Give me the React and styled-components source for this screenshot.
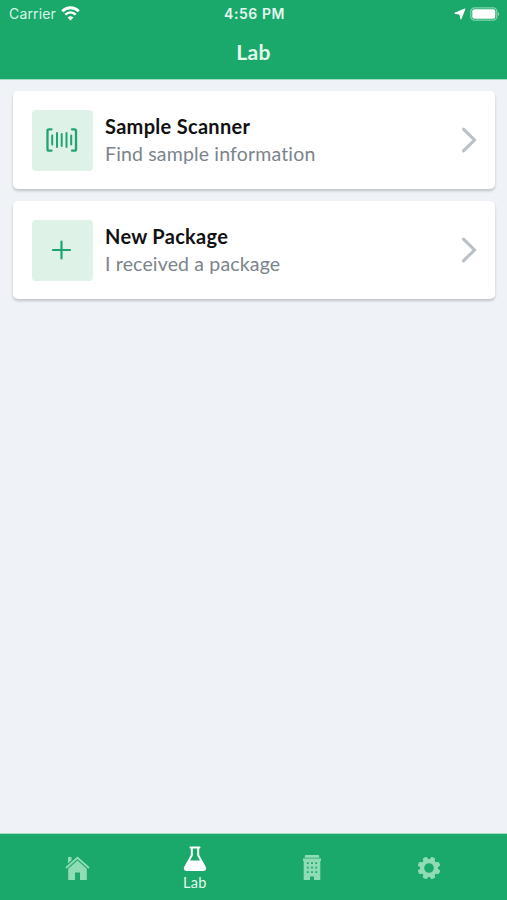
import React from "react"
import styled, { createGlobalStyle } from "styled-components"

const GlobalStyle = createGlobalStyle`
  * {
    box-sizing: border-box;
  }
  body {
    margin: 0;
    background: #eff3f8;
    font-family: Lato, "Noto Sans", sans-serif;
  }
`

const Screen = styled.div`
  display: flex;
  flex-direction: column;
  width: 100%;
  height: 100vh;
  overflow: hidden;
`
const Header = styled.header`
  height: 80px;
  flex: none;
  border-bottom: 1px solid #a5dcc4;
  background: #1aa86b;
  color: #fff;
`
const StatusBar = styled.div`
  display: grid;
  grid-template-columns: 1fr auto 1fr;
  align-items: center;
  height: 27px;
  padding: 0 7px 0 9px;
  font-family: Inter, sans-serif;
  font-size: 14px;
  line-height: 27px;
`
const Carrier = styled.div`
  display: flex;
  align-items: center;
  gap: 5px;
  color: #d9f6e8;
  letter-spacing: 0.15px;
`
const Time = styled.div`
  font-weight: 600;
  color: #e4f9ee;
  letter-spacing: 0.55px;
`
const Indicators = styled.div`
  display: flex;
  align-items: center;
  justify-content: flex-end;
  gap: 4px;
`
const Title = styled.h1`
  margin: 0;
  text-align: center;
  font-size: 21px;
  line-height: 50px;
  font-weight: 700;
  color: #e4f9ee;
  letter-spacing: 0.4px;
`
const List = styled.main`
  display: flex;
  flex: 1;
  flex-direction: column;
  gap: 12px;
  padding: 11px 12px 0 13px;
`
const Card = styled.div`
  display: flex;
  align-items: center;
  height: 98px;
  padding: 0 18px;
  border-radius: 5px;
  background: #fff;
  box-shadow: 0 2px 3px rgba(0, 0, 0, 0.2);
`
const IconBox = styled.div`
  display: flex;
  align-items: center;
  justify-content: center;
  width: 61px;
  height: 61px;
  margin-right: 12.5px;
  margin-left: 0.5px;
  border-radius: 4px;
  background: #def2e8;
`
const CardText = styled.div`
  flex: 1;
  line-height: 27px;
  white-space: nowrap;
`
const CardTitle = styled.div`
  font-size: 20px;
  font-weight: 700;
  color: #111;
  letter-spacing: 0.3px;
`
const CardSubtitle = styled.div`
  font-size: 19.5px;
  color: #7b848b;
  letter-spacing: 0.16px;
`
const TabBar = styled.nav`
  display: flex;
  flex: none;
  height: 67px;
  padding: 0 19px;
  border-top: 1px solid #a5dcc4;
  background: #1aa86b;
`
const Tab = styled.div`
  display: flex;
  flex: 1;
  flex-direction: column;
  align-items: center;
  justify-content: center;
  padding-top: ${props => (props.$active ? "2px" : "1px")};
  color: ${props => (props.$active ? "#fff" : "#8fdcb6")};
`
const TabLabel = styled.span`
  height: 17px;
  margin-top: 3px;
  font-size: 14.5px;
  line-height: 18px;
  letter-spacing: 0.4px;
  color: #e4f9ee;
`

const WifiIcon = () => (
  <svg width="19" height="15" viewBox="0 0 19 15" fill="none">
    <path d="M1.2 5.2C6 .6 13 .6 17.8 5.2" stroke="#fff" strokeWidth="2.9" />
    <path d="M4.3 8.6C7.4 5.7 11.6 5.7 14.7 8.6" stroke="#fff" strokeWidth="2.6" />
    <path d="M9.5 14.5 6.6 11.5Q9.5 8.9 12.4 11.5Z" fill="#fff" />
  </svg>
)

const LocationIcon = () => (
  <svg width="12" height="12" viewBox="0 0 12 12">
    <path d="M10.8 1 6.9 10.7 6 6.1 1 5.2Z" fill="#fff" stroke="#fff" strokeWidth="1.2" strokeLinejoin="round" />
  </svg>
)

const BatteryIcon = () => (
  <svg width="30" height="14" viewBox="0 0 30 14">
    <rect x=".8" y=".8" width="26" height="12.4" rx="3.6" fill="none" stroke="#83d4ae" strokeWidth="1.3" />
    <rect x="2.3" y="2.3" width="23" height="9.4" rx="2" fill="#fff" />
    <path d="M27.9 4.7Q30.6 7 27.9 9.3Z" fill="#83d4ae" />
  </svg>
)

const BarcodeIcon = () => (
  <svg width="32" height="24" viewBox="0 0 32 24" fill="none" stroke="#24a273" strokeWidth="2.3" strokeLinecap="round" strokeLinejoin="round">
    <path d="M5.5 1.3H3Q1.5 1.3 1.5 2.8V21.2Q1.5 22.7 3 22.7H5.5" />
    <path d="M26 1.3H28.5Q30 1.3 30 2.8V21.2Q30 22.7 28.5 22.7H26" />
    <path strokeWidth="2" d="M6.2 7.5V16.5M11 5V19M15.7 6V18M20.5 5V19M25.2 7.5V16.5" />
  </svg>
)

const PlusIcon = () => (
  <svg width="20" height="20" viewBox="0 0 20 20" fill="none" stroke="#1ea26e" strokeWidth="2.2" strokeLinecap="round">
    <path d="M9.5 1.5V18.5M1 10H18" />
  </svg>
)

const ChevronIcon = () => (
  <svg width="16" height="26" viewBox="0 0 16 26" fill="none" stroke="#bbc0c6" strokeWidth="3.1" strokeLinecap="round">
    <path d="M2.5 2.2 13.5 13 2.5 23.8" />
  </svg>
)

const HomeIcon = () => (
  <svg width="25" height="24" viewBox="0 0 25 24" fill="currentColor">
    <path d="M3 1H6.5V4.2L3 7.2Z" />
    <path d="M1 12 12.5 1.8 24 12" fill="none" stroke="currentColor" strokeWidth="1.9" />
    <path d="M12.5 4.5 21.8 12.7V24H15V16.5H10V24H3.2V12.7Z" />
  </svg>
)

const FlaskIcon = () => (
  <svg width="24" height="25" viewBox="0 0 24 25" fill="currentColor">
    <path
      fillRule="evenodd"
      d="M7.4 .5H16.6Q17.5 .5 17.5 1.5T16.6 2.5H16.2V9L22.6 20.4Q24.5 24.8 20.5 25H3.5Q-.5 24.8 1.4 20.4L7.8 9V2.5H7.4Q6.5 2.5 6.5 1.5T7.4 .5ZM9.8 2.5V9.5L7 14.5H17L14.2 9.5V2.5Z"
    />
  </svg>
)

const BuildingIcon = () => (
  <svg width="18" height="25" viewBox="0 0 18 25" fill="currentColor">
    <path d="M2.2 0H15.8L16.4 2.7H1.6Z" />
    <path
      fillRule="evenodd"
      d="M0 3.5H18V6H17.3V25H11V21.5H7V25H.7V6H0ZM3.9 7.3V9.1H5.6V7.3ZM8.1 7.3V9.1H9.9V7.3ZM12.4 7.3V9.1H14.1V7.3ZM3.9 11.8V13.6H5.6V11.8ZM8.1 11.8V13.6H9.9V11.8ZM12.4 11.8V13.6H14.1V11.8ZM3.9 16.3V18.1H5.6V16.3ZM8.1 16.3V18.1H9.9V16.3ZM12.4 16.3V18.1H14.1V16.3Z"
    />
  </svg>
)

const GearIcon = () => (
  <svg width="24" height="24" viewBox="-12 -12 24 24">
    <circle r="6.9" fill="none" stroke="currentColor" strokeWidth="4.2" />
    {[22.5, 67.5, 112.5, 157.5, 202.5, 247.5, 292.5, 337.5].map(angle => (
      <path
        key={angle}
        transform={`rotate(${angle})`}
        d="M-3 -7 -2.2 -10.6Q-2 -11.4-1.2 -11.4H1.2Q2 -11.4 2.2 -10.6L3 -7Z"
        fill="currentColor"
      />
    ))}
  </svg>
)

const ActionCard = ({ icon, title, subtitle }) => (
  <Card>
    <IconBox>{icon}</IconBox>
    <CardText>
      <CardTitle>{title}</CardTitle>
      <CardSubtitle>{subtitle}</CardSubtitle>
    </CardText>
    <ChevronIcon />
  </Card>
)

const App = () => (
  <>
    <GlobalStyle />
    <Screen>
      <Header>
        <StatusBar>
          <Carrier>
            Carrier
            <WifiIcon />
          </Carrier>
          <Time>4:56 PM</Time>
          <Indicators>
            <LocationIcon />
            <BatteryIcon />
          </Indicators>
        </StatusBar>
        <Title>Lab</Title>
      </Header>
      <List>
        <ActionCard
          icon={<BarcodeIcon />}
          title="Sample Scanner"
          subtitle="Find sample information"
        />
        <ActionCard
          icon={<PlusIcon />}
          title="New Package"
          subtitle="I received a package"
        />
      </List>
      <TabBar>
        <Tab>
          <HomeIcon />
        </Tab>
        <Tab $active>
          <FlaskIcon />
          <TabLabel>Lab</TabLabel>
        </Tab>
        <Tab>
          <BuildingIcon />
        </Tab>
        <Tab>
          <GearIcon />
        </Tab>
      </TabBar>
    </Screen>
  </>
)

export default App
